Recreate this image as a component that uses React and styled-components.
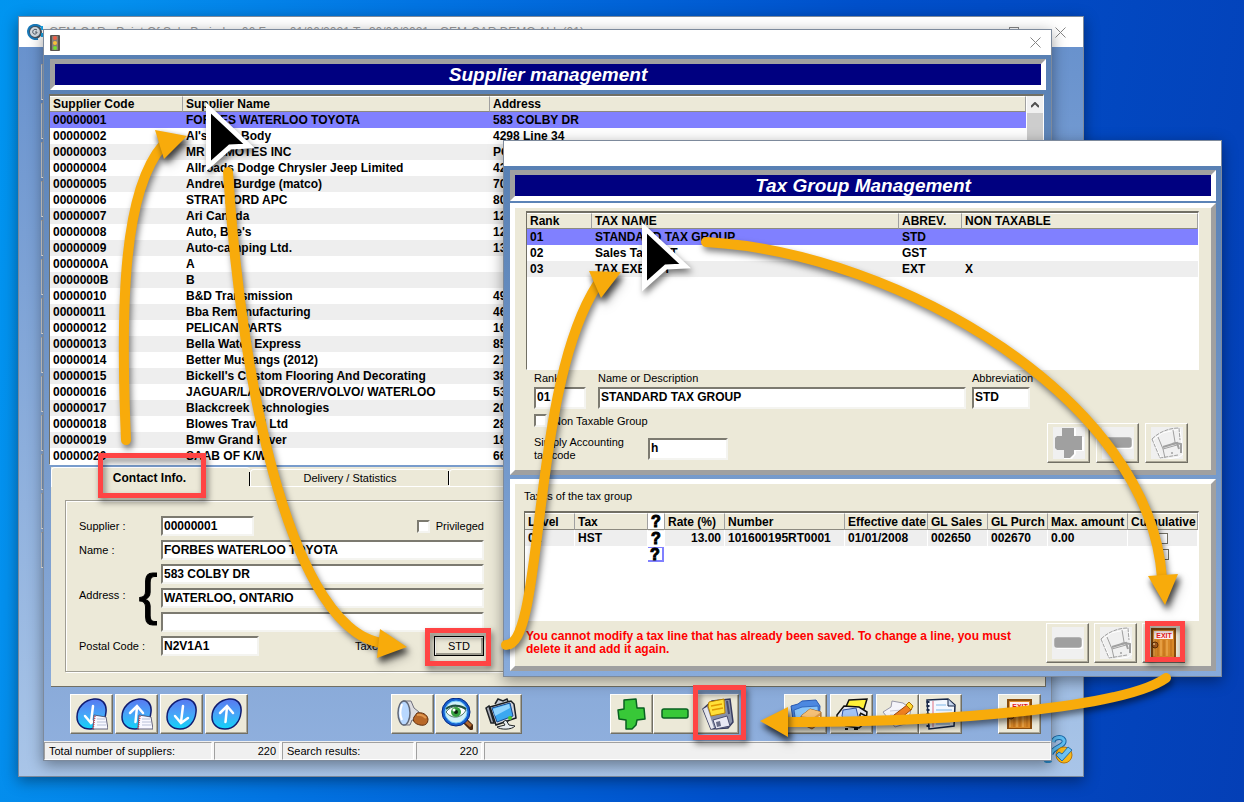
import React from 'react'
import styled, { createGlobalStyle, css } from 'styled-components'

const GlobalStyle = createGlobalStyle`
  * {
    box-sizing: border-box;
  }
  body {
    margin: 0;
    font-family: "Liberation Sans", Arial, sans-serif;
    font-size: 11px;
    color: #000;
  }
  button, input {
    font-family: inherit;
    color: inherit;
  }
`;

const suppliers = [
  ['00000001', 'FORBES WATERLOO TOYOTA', '583 COLBY DR'],
  ['00000002', "Al's Auto Body", '4298 Line 34'],
  ['00000003', 'MR REMOTES INC', 'PO'],
  ['00000004', 'Allroads Dodge Chrysler Jeep Limited', '42'],
  ['00000005', 'Andrew Burdge (matco)', '70'],
  ['00000006', 'STRATFORD APC', '80'],
  ['00000007', 'Ari Canada', '12'],
  ['00000008', "Auto, Bee's", '12'],
  ['00000009', 'Auto-camping Ltd.', '13'],
  ['0000000A', 'A', ''],
  ['0000000B', 'B', ''],
  ['00000010', 'B&D Transmission', '49'],
  ['00000011', 'Bba Remanufacturing', '46'],
  ['00000012', 'PELICAN PARTS', '16'],
  ['00000013', 'Bella Water Express', '85'],
  ['00000014', 'Better Mustangs (2012)', '21'],
  ['00000015', "Bickell's Custom Flooring And Decorating", '38'],
  ['00000016', 'JAGUAR/LANDROVER/VOLVO/ WATERLOO', '53'],
  ['00000017', 'Blackcreek Technologies', '20'],
  ['00000018', 'Blowes Travel Ltd', '28'],
  ['00000019', 'Bmw Grand River', '18'],
  ['00000020', 'SAAB OF K/W', '66'],
];

const taxGroups = [
  ['01', 'STANDARD TAX GROUP', 'STD', ''],
  ['02', 'Sales Tax GST', 'GST', ''],
  ['03', 'TAX EXEMPT', 'EXT', 'X'],
];

/* ---------- icons ---------- */

const Icon = ({ children }) => (
  <svg width="32" height="32" viewBox="0 0 32 32" aria-hidden="true">{children}</svg>
);

const ArrowIcon = ({ up, page }) => (
  <Icon>
    <defs>
      <linearGradient id="orb" x1="0" y1="0" x2="0" y2="1">
        <stop offset="0" stopColor="#5878f0" />
        <stop offset="0.5" stopColor="#48a4f8" />
        <stop offset="1" stopColor="#10d4f8" />
      </linearGradient>
    </defs>
    <path d="M18 1C26 0 31 6 30 14C29 24 23 31 14 31C6 31 1 26 1 19C1 9 9 2 18 1Z" fill="url(#orb)" stroke="#101c70" strokeWidth="1.500" />
    {up
      ? <path d="M14.500 24L16 9M9 15L16 8L22 15" fill="none" stroke="#fff" strokeWidth="2.500" strokeLinecap="round" />
      : <path d="M17 8L15 24M9 18L15 25L22 20" fill="none" stroke="#fff" strokeWidth="2.500" strokeLinecap="round" />}
    {page && (
      <g>
        <path d="M18 17L30 19L32 31L17 31Z" fill="#f8f8ff" stroke="#404060" strokeWidth="0.8" />
        <path d="M19 18L17 31" stroke="#c04050" strokeWidth="1.500" strokeDasharray="1 1" />
        <path d="M21 21H29M21 24H30M21 27H30" stroke="#b8c0d8" />
      </g>
    )}
  </Icon>
);

const FlashlightIcon = () => (
  <Icon>
    <path d="M6 3H14L17 10L22 14L19 23L15 22L13 27H6Z" fill="#dcdce0" stroke="#70707c" />
    <ellipse cx="7" cy="15" rx="6" ry="12" fill="#b8d8ff" stroke="#606878" strokeWidth="1.500" />
    <path d="M5 6C3 12 3 18 5 22" stroke="#fff" strokeWidth="2" fill="none" />
    <path d="M20 15C25 14 30 16 31 21C31 26 28 28 23 27C18 26 15 23 17 19Z" fill="#b86828" stroke="#603010" />
    <path d="M20 17C24 16 27 18 29 20" stroke="#e09850" strokeWidth="2" fill="none" />
  </Icon>
);

const SearchEyeIcon = () => (
  <Icon>
    <path d="M23 22L30 29" stroke="#4c2810" strokeWidth="6" strokeLinecap="round" />
    <path d="M24 23L30 28" stroke="#b06830" strokeWidth="3" />
    <circle cx="15" cy="14" r="14" fill="#1460d0" stroke="#082880" />
    <circle cx="15" cy="14" r="11" fill="#d0f0f8" stroke="#70c8f8" />
    <path d="M5 14C10 7 19 7 25 12C21 20 11 22 5 14Z" fill="#fff" stroke="#487060" />
    <path d="M5 11C11 6 20 7 25 11" stroke="#205040" strokeWidth="2" fill="none" />
    <circle cx="15" cy="14" r="5" fill="#38a040" />
    <circle cx="15" cy="14" r="2" fill="#102010" />
    <circle cx="13" cy="12" r="1.500" fill="#fff" />
  </Icon>
);

const MonitorIcon = () => (
  <Icon>
    <path d="M10 6L13 1L18 3L22 1L24 6" fill="#c8ccd4" stroke="#202428" strokeWidth="1.500" />
    <path d="M1 10L4 8L9 25L6 25Z" fill="#a8acb8" stroke="#202428" strokeWidth="1.500" />
    <path d="M5 9L26 3L29 6L31 20L11 27Z" fill="#d0d4dc" stroke="#181c20" strokeWidth="1.500" />
    <path d="M7 10L25 5L28 18L12 24Z" fill="#3ca8f0" stroke="#184890" />
    <path d="M8 11L24 6L25 10L10 18Z" fill="#90d4ff" />
    <path d="M21 22L24 27L30 28C27 32 15 32 12 29L20 27L18 24Z" fill="#e8ecf0" stroke="#202428" />
    <circle cx="25" cy="20" r="2" fill="#48c830" />
  </Icon>
);

const PlusIcon = ({ off }) => (
  <Icon>
    {off && <rect width="32" height="32" fill="#f0f0f0" />}
    {off && <path d="M9 1H23V10H31V24H23V27L19 32H11V23H3V11H9Z" fill="#fff" />}
    <path d={off
      ? 'M9 1H21V9H29V23H21V27L17 31H11V23H4L2 21V11L4 9H9Z'
      : 'M8 2L20 1L21 10L28 10L29 21L21 22L20 27L16 31L10 31L10 22L3 21L2 12L8 11Z'}
      fill={off ? '#a0a0a0' : '#38c838'} stroke={off ? 'none' : '#086020'} strokeWidth="1.500" strokeLinejoin="round" />
  </Icon>
);

const MinusIcon = ({ off }) => (
  <Icon>
    {off && <rect width="32" height="32" fill="#f0f0f0" />}
    {off && <rect x="4" y="12" width="27" height="10" rx="2" fill="#fff" />}
    <rect x="3" y="11" width="26" height="9" rx="2" fill={off ? '#a0a0a0' : '#38c838'} stroke={off ? '#a0a0a0' : '#086020'} strokeWidth="1.500" />
  </Icon>
);

const SaveIcon = () => (
  <Icon>
    <path d="M1 11L10 3L28 1L31 24L26 30L9 31Z" fill="#8890a8" stroke="#383c60" strokeWidth="1.500" />
    <path d="M1 11L5 9L12 30L9 31Z" fill="#e8e8f0" />
    <path d="M7 4L22 1L23 15L9 18L6 8Z" fill="#ffe038" stroke="#b88000" />
    <path d="M9 8L20 6M10 12L21 10" stroke="#e09800" strokeWidth="1.500" />
    <path d="M11 22L25 18L28 28L14 31Z" fill="#e8e8f4" stroke="#484c70" />
    <path d="M14 24L18 23L19 28L15 29Z" fill="#686c88" />
    <path d="M25 3L27 16" stroke="#484c70" strokeWidth="2" />
  </Icon>
);

const SaveOffIcon = () => (
  <Icon>
    <rect width="32" height="32" fill="#f0f0f0" />
    <g fill="none" stroke="#fff" transform="translate(1 1)">
      <path d="M1 12L10 5L28 1L31 26L27 29L10 32Z" />
    </g>
    <g fill="none" stroke="#a0a0a0">
      <path d="M1 12C8 5 18 1 28 1L29 13M1 12L9 31L27 28" strokeDasharray="4 1" />
      <path d="M7 10L12 22M22 3L24 15M12 22L26 18M12 22L14 31" />
      <path d="M12 20L25 16L30 17L30 26" strokeWidth="2" />
      <path d="M21 17L26 16L28 22" strokeWidth="2" />
    </g>
    <circle cx="21" cy="26" r="1" fill="#a0a0a0" />
  </Icon>
);

const ExitIcon = () => (
  <Icon>
    <rect x="3" y="1" width="25" height="30" fill="#8a4c0c" />
    <rect x="5" y="3" width="21" height="27" fill="#d88828" />
    <path d="M6 4V29M13 13V29M19 13V29" stroke="#f4b45c" />
    <path d="M10 13V29M16 13V29M23 13V29" stroke="#bc6c18" />
    <rect x="6" y="4" width="19" height="8" fill="#fff0f0" />
    <text x="16" y="11" fontSize="7" fontWeight="700" fill="#e81820" textAnchor="middle">EXIT</text>
    <circle cx="7" cy="18" r="3" fill="#a85c20" stroke="#603008" />
    <circle cx="6" cy="17" r="1" fill="#ffd090" />
  </Icon>
);

const FolderBoxIcon = () => (
  <Icon>
    <path d="M1 8L8 6L12 3L26 2L30 8L29 25L4 28Z" fill="#4c88e0" stroke="#2858b0" />
    <path d="M4 12L12 9L28 8L29 22L6 26Z" fill="#88c4f8" stroke="#3068c0" />
    <path d="M11 18L20 11L31 14V24L22 31L12 26Z" fill="#d89850" stroke="#986020" />
    <path d="M11 18L20 11L31 14L23 20Z" fill="#f4c078" />
    <path d="M26 20L30 18V23L26 26Z" fill="#fff" />
  </Icon>
);

const PrintIcon = () => (
  <Icon>
    <path d="M13 2L31 1L28 11H9Z" fill="#fff038" stroke="#101010" strokeWidth="1.500" />
    <path d="M1 17L8 8L23 9L31 14L30 24L23 30L10 28L1 22Z" fill="#e4e6ee" stroke="#101010" strokeWidth="1.500" />
    <path d="M7 12L20 10L23 22L10 25L6 18Z" fill="#a4c4f4" stroke="#3050a0" />
    <path d="M2 23L13 26M24 16V27M24 15L30 18" stroke="#101010" strokeWidth="1.500" />
    <path d="M9 31H12M18 31H22" stroke="#101010" strokeWidth="2" />
  </Icon>
);

const EditIcon = () => (
  <Icon>
    <path d="M1 14L9 9L10 3L21 5L29 11L26 25L13 29Z" fill="#f4f4fa" stroke="#9898a8" />
    <path d="M8 13L20 12M8 17H18" stroke="#c8c8d8" />
    <path d="M6 23L12 17L25 7L30 11L19 20Z" fill="#f08020" stroke="#a04808" />
    <path d="M24 7L27 4L31 8L29 12Z" fill="#ffd830" stroke="#a87000" />
    <path d="M6 23L10 19L13 22Z" fill="#404040" />
  </Icon>
);

const ReportIcon = () => (
  <Icon>
    <path d="M2 2L23 1L30 7L29 28L4 31Z" fill="#f4f8ff" stroke="#182848" strokeWidth="1.500" />
    <path d="M3 3V31" stroke="#182848" strokeWidth="3" strokeDasharray="2 2" />
    <path d="M8 3V29" stroke="#e07080" />
    <path d="M11 7H21M11 12H27M11 17H27M11 22H27M11 26H25" stroke="#80b8e8" />
    <path d="M23 1V8H30" fill="#c8d8f0" stroke="#182848" />
  </Icon>
);

const CloseIcon = () => (
  <svg width="11" height="11" viewBox="0 0 11 11" aria-hidden="true">
    <path d="M0.500 0.500L10.500 10.500M10.500 0.500L0.500 10.500" stroke="#868686" />
  </svg>
);

const LogoIcon = () => (
  <svg width="16" height="16" viewBox="0 0 16 16" aria-hidden="true">
    <circle cx="8" cy="8" r="6" fill="#d4dae0" stroke="#46525e" strokeWidth="2" />
    <path d="M14 3C9 -1 2 1 1 7C1 12 5 16 11 15" fill="none" stroke="#1878b8" strokeWidth="2" />
    <path d="M10 6C7 4 5 7 6 9C7 11 10 10 10 8H8" fill="none" stroke="#46525e" />
    <path d="M15 2V6M15 9V13" stroke="#18a0e0" strokeWidth="2" />
  </svg>
);

const TrafficIcon = () => (
  <svg width="10" height="16" viewBox="0 0 10 16" aria-hidden="true">
    <rect width="10" height="16" rx="1" fill="#585450" />
    <rect x="2" y="1" width="6" height="14" fill="#888078" />
    <circle cx="5" cy="3" r="2" fill="#f06048" />
    <circle cx="5" cy="8" r="2" fill="#f8c038" />
    <circle cx="5" cy="13" r="2" fill="#70e030" />
  </svg>
);

const HelpIcon = () => (
  <svg width="30" height="30" viewBox="0 0 30 30" aria-hidden="true">
    <path d="M9 7C10 1 21 1 20 7C19 12 9 12 7 19" fill="none" stroke="#1868a8" strokeWidth="5" />
    <path d="M9 7C10 1 21 1 20 7C19 12 9 12 7 19" fill="none" stroke="#60c0f4" strokeWidth="3" />
    <ellipse cx="4" cy="26" rx="4" ry="2" fill="#2888c8" />
    <circle cx="20" cy="20" r="8" fill="#f8b818" stroke="#b87808" />
    <path d="M12 20L18 26L28 15L24 12L18 19L15 17Z" fill="#70c4f4" stroke="#2070b0" />
  </svg>
);

/* ---------- shared parts ---------- */

const Desktop = styled.div`
  position: relative;
  min-height: 100vh;
  overflow: hidden;
  background: linear-gradient(100deg, #0095f0 0%, #0490ee 8%, #0274e2 30%, #0050cb 62%, #043fb6 100%);
`;

const Win = styled.section`
  position: absolute;
  top: ${({ $top }) => $top}px;
  left: ${({ $left }) => $left}px;
  right: ${({ $right }) => $right}px;
  border: 1px solid #7d8a9c;
  box-shadow: 0 4px 14px rgba(0, 0, 0, 0.4);
  background: linear-gradient(${({ $from }) => $from}, ${({ $to }) => $to});
`;

const TitleBar = styled.header`
  display: flex;
  align-items: center;
  gap: 6px;
  height: ${({ $tall }) => ($tall ? 30 : 25)}px;
  padding: 0 ${({ $tall }) => ($tall ? 17 : 10)}px 0 ${({ $tall }) => ($tall ? 8 : 6)}px;
  background: #fff;
  font-size: 12px;
  color: #999;
`;

const TitleButton = styled.button`
  display: flex;
  padding: 0;
  border: 0;
  background: none;
  margin-left: ${({ $first }) => ($first ? 'auto' : '30px')};
`;

const MaxBox = styled.span`
  width: 10px;
  height: 10px;
  border: 1px solid #868686;
`;

const Banner = styled.h1`
  margin: 4px 5px 0 6px;
  height: 31px;
  border: 5px solid;
  border-color: #a0a0a0 #fff #fff #a0a0a0;
  background: #000080;
  color: #fff;
  font-size: 19px;
  font-style: italic;
  line-height: 22px;
  text-align: center;
`;

const List = styled.div`
  display: flex;
  min-height: ${({ $min }) => $min || 0}px;
  border: 1px solid #fff;
  border-left-color: #716f64;
  border-top: 2px solid #716f64;
  background: #fff;
`;

const Table = styled.table`
  flex: 1;
  width: 100%;
  height: max-content;
  table-layout: fixed;
  border-collapse: separate;
  border-spacing: 0;
  font-size: 12px;
  font-weight: 700;
  th, td {
    height: 16px;
    padding: 0 0 0 3px;
    line-height: 15px;
    text-align: left;
    white-space: nowrap;
    overflow: hidden;
  }
  th {
    background: #ece9d8;
    border-right: 1px solid #a0a0a0;
    border-bottom: 1px solid #8c8a80;
    border-top: 1px solid #fff;
    line-height: 14px;
  }
`;

const Row = styled.tr`
  background: ${({ $shade, $selected }) => ($selected ? '#8080ff' : $shade ? '#eeeeee' : '#fff')};
`;

const ScrollBar = styled.div`
  width: 17px;
  background: #f0f0f0;
  border-left: 1px solid #fff;
`;

const ScrollButton = styled.button`
  display: flex;
  align-items: center;
  justify-content: center;
  width: 16px;
  height: 17px;
  padding: 0;
  border: 0;
  background: #f0f0f0;
`;

const Thumb = styled.div`
  height: 60px;
  background: #cdcdcd;
`;

const TextBox = styled.input`
  width: ${({ $width }) => ($width ? `${$width}px` : '100%')};
  height: ${({ $tall }) => ($tall ? 22 : 20)}px;
  padding: 0 0 ${({ $tall }) => ($tall ? 2 : 0)}px 1px;
  border: 2px solid;
  border-color: #7c7a70 #f4f4f0 #f4f4f0 #7c7a70;
  background: #fff;
  font-size: 12px;
  font-weight: 700;
`;

const Check = styled.label`
  display: flex;
  align-items: center;
  gap: 6px;
  input {
    appearance: none;
    width: 13px;
    height: 13px;
    margin: 0;
    border: 2px solid;
    border-color: #7c7a70 #f4f4f0 #f4f4f0 #7c7a70;
    background: #fff;
  }
`;

const raised = css`
  border: 1px solid;
  border-color: #fff #716f64 #716f64 #fff;
  box-shadow: inset -1px -1px 0 #aca899;
  background: #ece9d8;
`;

const ToolButton = styled.button`
  ${raised}
  display: flex;
  align-items: center;
  justify-content: center;
  width: 43px;
  height: 40px;
  padding: 0;
`;

const Group = styled.div`
  display: flex;
  gap: ${({ $gap }) => $gap}px;
  margin-left: ${({ $left }) => ($left === undefined ? 'auto' : `${$left}px`)};
`;

/* ---------- back window ---------- */

const BackBody = styled.div`
  display: flex;
  flex-direction: column;
  height: 729px;
  padding: 17px 9px 8px 22px;
`;

const Stub = styled.div`
  width: 30px;
  height: 36px;
  margin-bottom: 3px;
  border: 1px solid;
  border-color: #a0a0a0 #fff #fff #d8d8d8;
  background: #7f9fc8;
`;

const HelpButton = styled.button`
  margin: auto 0 0 auto;
  padding: 0;
  border: 0;
  background: none;
`;

const BackWindow = () => (
  <Win $top={16} $left={18} $right={160} $from="#6690cc" $to="#a9c5e8">
    <TitleBar $tall>
      <LogoIcon />
      <span>GEM-CAR - Point Of Sale Periode : 06 From 01/06/2021 To 30/06/2021 - GEM-CAR DEMO ALL (01)</span>
      <TitleButton $first aria-label="Maximize"><MaxBox /></TitleButton>
      <TitleButton aria-label="Close"><CloseIcon /></TitleButton>
    </TitleBar>
    <BackBody>
      {Array.from({ length: 13 }, (_, i) => <Stub key={i} />)}
      <HelpButton aria-label="Help"><HelpIcon /></HelpButton>
    </BackBody>
  </Win>
);

/* ---------- supplier window ---------- */

const ListArea = styled.div`
  margin: 4px 7px 0 5px;
`;

const Tabs = styled.div`
  display: flex;
  align-items: flex-end;
  margin: 2px 5px 0 7px;
  background: #ece9d8;
`;

const Tab = styled.button`
  position: relative;
  width: ${({ $last }) => ($last ? 'auto' : '199px')};
  flex: ${({ $last }) => ($last ? 1 : 'none')};
  height: ${({ $active }) => ($active ? 20 : 18)}px;
  padding: 0 ${({ $active }) => ($active ? 3 : 0)}px 0 0;
  border: 0;
  border-top: 1px solid #fff;
  border-left: 1px solid #fff;
  border-bottom: ${({ $active }) => ($active ? '0' : '1px solid #fff')};
  border-radius: 4px 4px 0 0;
  background: #ece9d8;
  font-size: ${({ $active }) => ($active ? 12 : 11)}px;
  font-weight: ${({ $active }) => ($active ? 700 : 400)};
  &::after {
    content: "";
    position: absolute;
    right: 0;
    bottom: 1px;
    width: 1px;
    height: 14px;
    background: #000;
  }
`;

const TabPanel = styled.div`
  margin: 0 5px 0 7px;
  padding: 13px 10px 14px 14px;
  border-right: 1px solid #716f64;
  border-bottom: 1px solid #716f64;
  background: #ece9d8;
`;

const FormBox = styled.form`
  padding: 15px 13px;
  border: 1px solid #a09e94;
  box-shadow: inset 1px 1px 0 #fff, 1px 1px 0 #fff;
`;

const FormGrid = styled.div`
  display: grid;
  grid-template-columns: 56px 26px 323px;
  grid-auto-rows: 20px;
  row-gap: 4px;
  align-items: center;
`;

const Label = styled.label`
  grid-column: 1 / 3;
  line-height: 13px;
`;

const AddressLabel = styled.label`
  grid-row: 3 / 6;
  grid-column: 1;
  padding-bottom: 6px;
`;

const Brace = styled.span`
  grid-row: 3 / 6;
  grid-column: 2;
  padding-bottom: 8px;
  font-size: 56px;
  line-height: 60px;
  text-align: center;
  -webkit-text-stroke: 1px #000;
`;

const Field = styled.div`
  grid-column: 3;
  display: flex;
  align-items: center;
  justify-content: space-between;
`;

const TaxChoice = styled.div`
  display: flex;
  align-items: center;
  justify-content: space-between;
  width: 129px;
`;

const StdButton = styled.button`
  width: 50px;
  height: 20px;
  padding: 0;
  border: 1px solid #000;
  box-shadow: inset 1px 1px 0 #fff, inset -2px -2px 0 #9c9a8e;
  background: #ece9d8;
  font-size: 11px;
`;

const ToolBar = styled.div`
  display: flex;
  padding: 7px 10px 7px 26px;
`;

const StatusBar = styled.footer`
  display: grid;
  grid-template-columns: 168px 66px 132px 66px 1fr;
  gap: 2px;
  height: 19px;
  border-top: 1px solid #f0f0f0;
  background: #f8f8f8;
`;

const StatusCell = styled.span`
  padding: 0 3px 0 4px;
  border: 1px solid;
  border-color: #a0a0a0 #fff #fff #a0a0a0;
  background: #f0f0f0;
  line-height: 16px;
  text-align: ${({ $right }) => ($right ? 'right' : 'left')};
`;

const SupplierWindow = () => (
  <Win $top={29} $left={43} $right={192} $from="#567eb2" $to="#90b0de">
    <TitleBar>
      <TrafficIcon />
      <TitleButton $first aria-label="Close"><CloseIcon /></TitleButton>
    </TitleBar>
    <Banner>Supplier management</Banner>
    <ListArea>
      <List>
        <Table>
          <colgroup><col width="133" /><col width="307" /><col /></colgroup>
          <thead>
            <tr><th>Supplier Code</th><th>Supplier Name</th><th>Address</th></tr>
          </thead>
          <tbody>
            {suppliers.map(([code, name, address], i) => (
              <Row key={code} $selected={i === 0} $shade={i % 2 === 0}>
                <td>{code}</td><td>{name}</td><td>{address}</td>
              </Row>
            ))}
          </tbody>
        </Table>
        <ScrollBar>
          <ScrollButton aria-label="Scroll up">
            <svg width="8" height="6" viewBox="0 0 8 6"><path d="M0 5L4 1L8 5" fill="none" stroke="#505050" strokeWidth="2" /></svg>
          </ScrollButton>
          <Thumb />
        </ScrollBar>
      </List>
    </ListArea>
    <Tabs>
      <Tab $active>Contact Info.</Tab>
      <Tab>Delivery / Statistics</Tab>
      <Tab $last aria-label="More" />
    </Tabs>
    <TabPanel>
      <FormBox onSubmit={(e) => e.preventDefault()}>
        <FormGrid>
          <Label htmlFor="code">Supplier :</Label>
          <Field>
            <TextBox id="code" $width={93} defaultValue="00000001" />
            <Check><input type="checkbox" />Privileged</Check>
          </Field>
          <Label htmlFor="name">Name :</Label>
          <Field><TextBox id="name" defaultValue="FORBES WATERLOO TOYOTA" /></Field>
          <AddressLabel htmlFor="address1">Address :</AddressLabel>
          <Brace>{'{'}</Brace>
          <Field><TextBox id="address1" defaultValue="583 COLBY DR" /></Field>
          <Field><TextBox aria-label="Address line 2" defaultValue="WATERLOO, ONTARIO" /></Field>
          <Field><TextBox aria-label="Address line 3" /></Field>
          <Label htmlFor="postal">Postal Code :</Label>
          <Field>
            <TextBox id="postal" $width={98} defaultValue="N2V1A1" />
            <TaxChoice>
              <label htmlFor="taxes">Taxes :</label>
              <StdButton id="taxes" type="button">STD</StdButton>
            </TaxChoice>
          </Field>
        </FormGrid>
      </FormBox>
    </TabPanel>
    <ToolBar>
      <Group $gap={2} $left={0}>
        <ToolButton aria-label="Last page"><ArrowIcon page /></ToolButton>
        <ToolButton aria-label="First page"><ArrowIcon up page /></ToolButton>
        <ToolButton aria-label="Next"><ArrowIcon /></ToolButton>
        <ToolButton aria-label="Previous"><ArrowIcon up /></ToolButton>
      </Group>
      <Group $gap={1} $left={143}>
        <ToolButton aria-label="Find"><FlashlightIcon /></ToolButton>
        <ToolButton aria-label="View"><SearchEyeIcon /></ToolButton>
        <ToolButton aria-label="Screen"><MonitorIcon /></ToolButton>
      </Group>
      <Group $gap={0} $left={88}>
        <ToolButton aria-label="Add"><PlusIcon /></ToolButton>
        <ToolButton aria-label="Remove"><MinusIcon /></ToolButton>
        <ToolButton aria-label="Save"><SaveIcon /></ToolButton>
      </Group>
      <Group $gap={3} $left={45}>
        <ToolButton aria-label="Files"><FolderBoxIcon /></ToolButton>
        <ToolButton aria-label="Print"><PrintIcon /></ToolButton>
      </Group>
      <Group $gap={0} $left={3}>
        <ToolButton aria-label="Edit"><EditIcon /></ToolButton>
        <ToolButton aria-label="Report"><ReportIcon /></ToolButton>
      </Group>
      <Group $gap={0}>
        <ToolButton aria-label="Exit"><ExitIcon /></ToolButton>
      </Group>
    </ToolBar>
    <StatusBar>
      <StatusCell>Total number of suppliers:</StatusCell>
      <StatusCell $right>220</StatusCell>
      <StatusCell>Search results:</StatusCell>
      <StatusCell $right>220</StatusCell>
      <StatusCell />
    </StatusBar>
  </Win>
);

/* ---------- tax group window ---------- */

const TaxBody = styled.div`
  padding-bottom: 5px;
`;

const Panel = styled.div`
  margin: ${({ $gap }) => $gap}px 5px 0 6px;
  padding: ${({ $pad }) => $pad};
  border: 5px solid;
  border-color: #fff #a0a0a0 #a0a0a0 #fff;
  background: #ece9d8;
`;

const GroupFields = styled.div`
  display: grid;
  grid-template-columns: 64px minmax(0, 374px) 58px;
  padding: 1px 0 0 8px;
  div:first-child {
    padding-right: 12px;
  }
  div:nth-child(2) {
    padding-right: 6px;
  }
  label {
    display: block;
    line-height: 15px;
    padding-bottom: 1px;
  }
`;

const GroupBottom = styled.div`
  display: flex;
  justify-content: space-between;
  align-items: flex-end;
  padding: 5px 11px 0 8px;
`;

const CodeRow = styled.div`
  display: flex;
  align-items: center;
  gap: 14px;
  margin-top: 9px;
  padding-bottom: 1px;
  label {
    width: 100px;
    line-height: 13px;
  }
`;

const Caption = styled.div`
  padding-bottom: 8px;
  line-height: 14px;
`;

const Mark = styled.span`
  display: block;
  width: 16px;
  height: 15px;
  background: #fff;
  border: solid #8080ff;
  border-width: ${({ $focus }) => ($focus ? '1px 2px 2px 0' : 0)};
  font-size: 16px;
  font-weight: 700;
  line-height: ${({ $focus }) => ($focus ? 13 : 15)}px;
  text-align: center;
  -webkit-text-stroke: 1px #000;
`;

const LineTable = styled(Table)`
  th:nth-child(3), td:nth-child(3) {
    padding: 0;
  }
  tbody tr:first-child td {
    border-right: 1px solid #fff;
  }
  td:nth-child(4) {
    text-align: right;
    padding-right: 3px;
  }
  td:last-child {
    text-align: center;
    padding: 0;
  }
  input {
    appearance: none;
    display: block;
    width: 11px;
    height: 11px;
    margin: 0 auto;
    border: 1px solid #716f64;
    background: #fff;
  }
`;

const LineFooter = styled.div`
  display: flex;
  align-items: center;
  justify-content: space-between;
  padding: 2px 14px 0 2px;
`;

const Warning = styled.p`
  margin: 0;
  max-width: 500px;
  color: #f00;
  font-size: 12px;
  font-weight: 700;
  line-height: 13px;
`;

const TaxWindow = () => (
  <Win $top={140} $left={503} $right={22} $from="#567eb2" $to="#88abdb">
    <TitleBar />
    <TaxBody>
      <Banner>Tax Group Management</Banner>
      <Panel $gap={2} $pad="3px 12px 7px 11px">
        <List $min={159}>
          <Table>
            <colgroup><col width="65" /><col width="307" /><col width="63" /><col /></colgroup>
            <thead>
              <tr><th>Rank</th><th>TAX NAME</th><th>ABREV.</th><th>NON TAXABLE</th></tr>
            </thead>
            <tbody>
              {taxGroups.map((group, i) => (
                <Row key={group[0]} $selected={i === 0} $shade={i % 2 === 0}>
                  {group.map((value, n) => <td key={n}>{value}</td>)}
                </Row>
              ))}
            </tbody>
          </Table>
        </List>
        <GroupFields>
          <div>
            <label htmlFor="rank">Rank</label>
            <TextBox id="rank" $tall defaultValue="01" />
          </div>
          <div>
            <label htmlFor="description">Name or Description</label>
            <TextBox id="description" $tall defaultValue="STANDARD TAX GROUP" />
          </div>
          <div>
            <label htmlFor="abbreviation">Abbreviation</label>
            <TextBox id="abbreviation" $tall defaultValue="STD" />
          </div>
        </GroupFields>
        <GroupBottom>
          <div>
            <Check><input type="checkbox" />Non Taxable Group</Check>
            <CodeRow>
              <label htmlFor="simply">Simply Accounting tax code</label>
              <TextBox id="simply" $tall $width={80} defaultValue="h" />
            </CodeRow>
          </div>
          <Group $gap={6}>
            <ToolButton disabled aria-label="Add group"><PlusIcon off /></ToolButton>
            <ToolButton disabled aria-label="Remove group"><MinusIcon off /></ToolButton>
            <ToolButton disabled aria-label="Save group"><SaveOffIcon /></ToolButton>
          </Group>
        </GroupBottom>
      </Panel>
      <Panel $gap={4} $pad="5px 12px 3px 9px">
        <Caption>Taxes of the tax group</Caption>
        <List $min={110}>
          <LineTable>
            <colgroup>
              <col width="50" /><col width="73" /><col width="17" /><col width="60" /><col width="120" />
              <col width="83" /><col width="60" /><col width="60" /><col width="80" /><col />
            </colgroup>
            <thead>
              <tr>
                <th>Level</th><th>Tax</th><th><Mark>?</Mark></th><th>Rate (%)</th><th>Number</th>
                <th>Effective date</th><th>GL Sales</th><th>GL Purch</th><th>Max. amount</th><th>Cumulative</th>
              </tr>
            </thead>
            <tbody>
              <Row $shade>
                <td>01</td><td>HST</td><td><Mark>?</Mark></td><td>13.00</td><td>101600195RT0001</td>
                <td>01/01/2008</td><td>002650</td><td>002670</td><td>0.00</td>
                <td><input type="checkbox" aria-label="Cumulative" /></td>
              </Row>
              <Row>
                <td /><td /><td><Mark $focus>?</Mark></td><td /><td /><td /><td /><td /><td />
                <td><input type="checkbox" aria-label="Cumulative, new line" /></td>
              </Row>
            </tbody>
          </LineTable>
        </List>
        <LineFooter>
          <Warning>
            You cannot modify a tax line that has already been saved. To change a line, you must
            delete it and add it again.
          </Warning>
          <Group $gap={5}>
            <ToolButton disabled aria-label="Remove line"><MinusIcon off /></ToolButton>
            <ToolButton disabled aria-label="Save line"><SaveOffIcon /></ToolButton>
            <ToolButton aria-label="Exit"><ExitIcon /></ToolButton>
          </Group>
        </LineFooter>
      </Panel>
    </TaxBody>
  </Win>
);

/* ---------- guide arrows over the windows ---------- */

const Overlay = styled.svg`
  position: absolute;
  inset: 0;
  width: 100%;
  height: 802px;
  pointer-events: none;
  g {
    filter: drop-shadow(2px 4px 3px rgba(0, 0, 0, 0.5));
  }
`;

const Pointer = ({ x, y }) => (
  <path
    d="M2.500 6L43 44L24 45L2.500 64Z"
    transform={`translate(${x} ${y})`}
    fill="#000"
    stroke="#fff"
    strokeWidth="5"
  />
);

const Guides = () => (
  <Overlay viewBox="0 0 1244 802" preserveAspectRatio="none" aria-hidden="true">
    <g fill="none" stroke="#ff4444" strokeWidth="5">
      <rect x="100.500" y="455.500" width="103" height="40" />
      <rect x="427.500" y="630.500" width="61" height="33" />
      <rect x="1147.500" y="623.500" width="35" height="36" />
      <rect x="695.500" y="687.500" width="48" height="50" />
    </g>
    <g>
      <Pointer x={206} y={102} />
      <Pointer x={642} y={222} />
    </g>
    <g fill="none" stroke="#f8ab0b" strokeWidth="10" strokeLinecap="round">
      <path d="M126 440C120 300 124 190 163 145" />
      <path d="M228 172C242 400 295 630 382 643" />
      <path d="M506 645C545 645 530 390 597 285" />
      <path d="M706 242C900 253 1150 400 1162 578" />
      <path d="M1166 678C1130 704 980 722 786 722" />
      <g fill="#f8ab0b" stroke="none">
        <path d="M155 130L187 136L164 159Z" />
        <path d="M380 629L407 647L377 658Z" />
        <path d="M589 271L621 272L601 298Z" />
        <path d="M1148 576L1178 574L1165 605Z" />
        <path d="M760 721L788 707L788 737Z" />
      </g>
    </g>
  </Overlay>
);

const App = () => {
  return (
    <>
      <GlobalStyle />
      <Desktop>
        <BackWindow />
        <SupplierWindow />
        <TaxWindow />
        <Guides />
      </Desktop>
    </>
  );
};

export default App;
